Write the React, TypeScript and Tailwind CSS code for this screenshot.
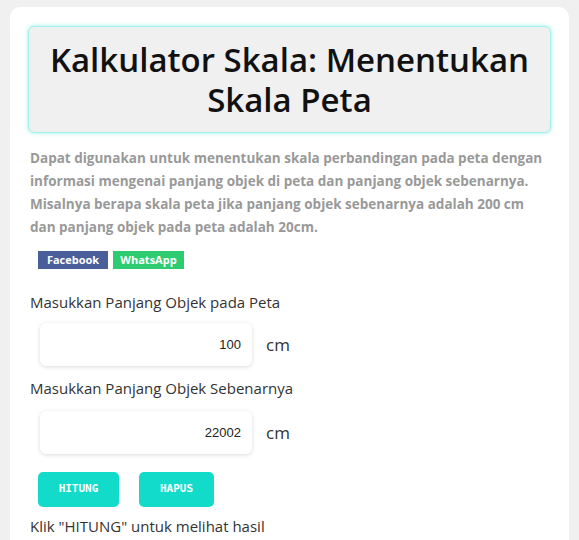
import React, { useState } from 'react';

const font = { fontFamily: '"Open Sans", "DejaVu Sans", sans-serif' };

const NumberField: React.FC<{ value: string; onChange: (v: string) => void }> = ({ value, onChange }) => (
  <div className="flex items-center ml-[12px]">
    <input
      value={value}
      onChange={(e) => onChange(e.target.value)}
      className="w-[212px] h-[43px] bg-white rounded-[6px] shadow-[0_1px_4px_rgba(0,0,0,0.15)] text-right pr-[11px] text-[13px] text-[#222] outline-none"
      style={{ fontFamily: '"Liberation Sans", Arial, sans-serif' }}
    />
    <span className="ml-[14px] text-[17px] text-[#333]">cm</span>
  </div>
);

const App: React.FC = () => {
  const [peta, setPeta] = useState('100');
  const [asli, setAsli] = useState('22002');

  return (
    <div className="min-h-screen bg-[#f0f0f0] pt-[7px] px-[10px]" style={font}>
      <div className="bg-white rounded-[10px] px-[18px] pt-[19px] pb-[20px]">
        <div className="h-[107px] bg-[#f0f0f0] border border-[#a3f1ea] rounded-[6px] shadow-[0_0_4px_rgba(80,230,215,0.6)] flex flex-col items-center justify-center">
          <h1 className="text-center text-[33px] leading-[40px] font-semibold text-[#111]">
            <span className="block">Kalkulator Skala: Menentukan</span>
            <span className="block">Skala Peta</span>
          </h1>
        </div>

        <p className="mt-[14px] ml-[2px] text-[13.5px] leading-[23px] font-bold text-[#999]">
          Dapat digunakan untuk menentukan skala perbandingan pada peta dengan informasi mengenai panjang objek di peta dan panjang objek sebenarnya. Misalnya berapa skala peta jika panjang objek sebenarnya adalah 200 cm dan panjang objek pada peta adalah 20cm.
        </p>

        <div className="flex gap-[5px] mt-[12px] ml-[10px]">
          <a className="h-[18px] w-[70px] bg-[#4a5f99] text-white text-[11px] font-bold flex items-center justify-center">Facebook</a>
          <a className="h-[18px] w-[71px] bg-[#2ecc71] text-white text-[11px] font-bold flex items-center justify-center">WhatsApp</a>
        </div>

        <label className="block mt-[22px] ml-[2px] text-[15px] leading-[22px] text-[#333]">Masukkan Panjang Objek pada Peta</label>
        <div className="mt-[10px]">
          <NumberField value={peta} onChange={setPeta} />
        </div>

        <label className="block mt-[11px] ml-[2px] text-[15px] leading-[22px] text-[#333]">Masukkan Panjang Objek Sebenarnya</label>
        <div className="mt-[12px]">
          <NumberField value={asli} onChange={setAsli} />
        </div>

        <div className="flex gap-[20px] mt-[18px] ml-[10px]">
          <button
            className="w-[81px] h-[35px] rounded-[5px] bg-[#12dcc9] text-white text-[11px] font-bold"
            style={{ fontFamily: '"DejaVu Sans Mono", monospace' }}
          >
            HITUNG
          </button>
          <button
            className="w-[75px] h-[35px] rounded-[5px] bg-[#12dcc9] text-white text-[11px] font-bold"
            style={{ fontFamily: '"DejaVu Sans Mono", monospace' }}
          >
            HAPUS
          </button>
        </div>

        <p className="mt-[8px] ml-[2px] text-[15px] leading-[22px] text-[#333]">Klik "HITUNG" untuk melihat hasil</p>
      </div>
    </div>
  );
};

export default App;
